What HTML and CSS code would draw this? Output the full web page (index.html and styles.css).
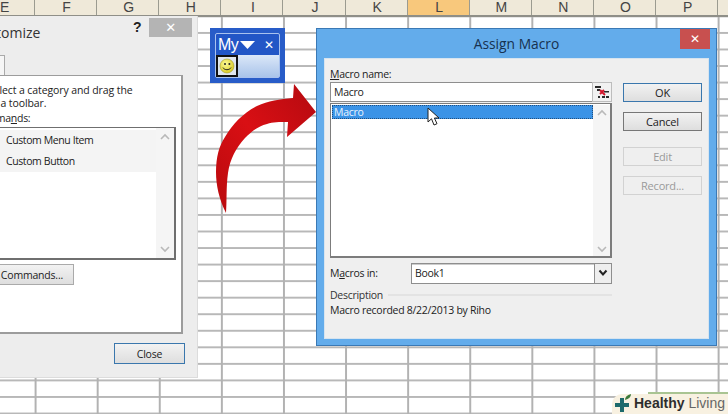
FILE: index.html
```html
<!DOCTYPE html>
<html lang="en">
<head>
<meta charset="utf-8">
<title>Assign Macro</title>
<link rel="stylesheet" href="styles.css">
</head>
<body>
<div class="sheet">
  <div class="columns">
    <div class="col c-e">E</div><div class="col">F</div><div class="col">G</div><div class="col">H</div><div class="col">I</div><div class="col">J</div><div class="col">K</div><div class="col active">L</div><div class="col">M</div><div class="col">N</div><div class="col">O</div><div class="col">P</div><div class="col"></div>
  </div>
  <div class="cells"></div>

  <section class="customize">
    <header class="cust-head">
      <h2 class="cust-title">Customize</h2>
      <span class="help">?</span>
      <span class="cust-close">✕</span>
    </header>
    <div class="tab"></div>
    <div class="panel">
      <p class="hint">Select a category and drag the<br>to a toolbar.</p>
      <p class="cmds-label">Comma<u>n</u>ds:</p>
      <div class="cmds">
        <div class="cmd-rows">
          <div class="cmd">Custom Menu Item</div>
          <div class="cmd">Custom Button</div>
        </div>
        <div class="scroll">
          <svg width="12" height="8" viewBox="0 0 12 8"><path d="M2 6l4-4 4 4" fill="none" stroke="#b9b9b9" stroke-width="1.6"/></svg>
          <svg width="12" height="8" viewBox="0 0 12 8"><path d="M2 2l4 4 4-4" fill="none" stroke="#b9b9b9" stroke-width="1.6"/></svg>
        </div>
      </div>
      <button class="btn cmd-btn">Rearrange Commands...</button>
    </div>
    <div class="cust-foot"><button class="btn primary close-btn">Close</button></div>
  </section>

  <section class="toolbar">
    <div class="tb-inner">
      <div class="tb-title"><span class="tb-name">My</span>
        <svg class="tb-caret" width="15" height="8" viewBox="0 0 15 8"><path d="M0 0h15L7.500 8z" fill="#fff"/></svg>
        <span class="tb-x">✕</span></div>
      <div class="tb-body">
        <div class="smile-box">
          <svg width="16" height="16" viewBox="0 0 16 16"><defs><radialGradient id="sm" cx=".4" cy=".35" r=".7"><stop offset="0" stop-color="#fdfb9a"/><stop offset="1" stop-color="#d6c71c"/></radialGradient></defs><circle cx="8" cy="8" r="7" fill="url(#sm)" stroke="#a59a2a" stroke-width=".6"/><circle cx="6" cy="6" r="1" fill="#222"/><circle cx="10.400" cy="6" r="1" fill="#222"/><path d="M4 9.600c1.400 2.800 6.400 2.800 8 0" fill="none" stroke="#222" stroke-width="1"/></svg>
        </div>
      </div>
    </div>
  </section>

  <svg class="arrow" width="125" height="145" viewBox="0 0 125 145">
    <defs><linearGradient id="ar" x1="0" y1="1" x2="1" y2="0"><stop offset="0" stop-color="#b80a0d"/><stop offset=".5" stop-color="#d90f14"/><stop offset="1" stop-color="#b40a10"/></linearGradient></defs>
    <path d="M21 138C14 124 11 110 11 97 11 82 14 71 20 62 28 49 38 38 52 31 63 26 75 24 88 23L89 9 111 37 82 62 83 47C74 47 68 47 62 49 53 51 46 57 40 63 31 73 25 84 23 98 21 112 22 125 21 138z" fill="url(#ar)"/>
  </svg>

  <section class="assign">
    <header class="as-head">
      <h1 class="as-title">Assign Macro</h1>
      <span class="as-close">✕</span>
    </header>
    <div class="as-body">
      <div class="as-main">
        <label class="lbl"><u>M</u>acro name:</label>
        <div class="name-row">
          <div class="name-input">Macro</div>
          <div class="ref-btn">
            <svg width="16" height="14" viewBox="0 0 16 14"><path d="M1 1h6v2H1zM3 4h3v2H3zM10 6h5v1.500h-5zM4 11h2v2H4zM8 11h3v2H8zM12 11h3v2h-3z" fill="#2a2a2a"/><path d="M6 5l5 5M6 9l4-4" stroke="#d2142a" stroke-width="2"/></svg>
          </div>
        </div>
        <div class="macro-list">
          <div class="macro-rows"><div class="macro-sel">Macro</div></div>
          <div class="scroll as-scroll">
            <svg width="12" height="8" viewBox="0 0 12 8"><path d="M2 6l4-4 4 4" fill="none" stroke="#b9b9b9" stroke-width="1.600"/></svg>
            <svg width="12" height="8" viewBox="0 0 12 8"><path d="M2 2l4 4 4-4" fill="none" stroke="#b9b9b9" stroke-width="1.600"/></svg>
          </div>
        </div>
        <div class="in-row">
          <label class="lbl in-lbl">M<u>a</u>cros in:</label>
          <div class="select"><span class="sel-val">Book1</span>
            <span class="sel-btn"><svg width="10" height="8" viewBox="0 0 10 8"><path d="M1.500 1.500L5 5.500l3.500-4" fill="none" stroke="#222" stroke-width="2"/></svg></span>
          </div>
        </div>
        <div class="desc-head"><span>Description</span><i class="rule"></i></div>
        <p class="desc">Macro recorded 8/22/2013 by Riho</p>
      </div>
      <div class="as-side">
        <button class="btn primary side">OK</button>
        <button class="btn side dark">Cancel</button>
        <button class="btn side off gap-top">Edit</button>
        <button class="btn side off">Record...</button>
      </div>
    </div>
  </section>

  <svg class="cursor" width="16" height="20" viewBox="0 0 16 20"><path d="M1 1v14l3.500-3.200L7 18l3-1.300-2.600-5.700H12z" fill="#fff" stroke="#222" stroke-width="1"/></svg>

  <div class="logo">
    <svg class="logo-mark" width="20" height="20" viewBox="0 0 20 20"><path d="M7 4h4v5h5v4h-5v5H7v-5H2V9h5z" fill="#1d6a6c"/><path d="M12 6c0-3 2-5 6-6 0 3-2 5-6 6z" fill="#3d7a3a"/></svg>
    <span class="logo-a">Healthy</span> <span class="logo-b">Living</span>
  </div>
</div>
</body>
</html>
```

FILE: styles.css
```css
*{box-sizing:border-box}
html,body{margin:0;padding:0}
body{width:728px;height:414px;overflow:hidden;background:#fff;font-family:"Open Sans","Noto Sans",sans-serif;color:#222;letter-spacing:-.28px}
.sheet{position:relative;width:728px;height:414px;overflow:hidden}
.columns{display:flex;height:17px;background:#efe9d9;border-bottom:2px solid #8f8f88;margin-left:-27px;letter-spacing:0}
.col{flex:0 0 62.1px;border-right:1px solid #9b9b90;font:14px/15px "Liberation Sans",sans-serif;text-align:center;color:#444;padding-left:2px}
.col.active{background:#f8c87c}
.cells{height:397px;background-color:#fff;background-image:linear-gradient(to right,#b2b2b2 2px,transparent 2px),linear-gradient(to bottom,#b8b8b8 2px,transparent 2px);background-size:62.1px 16.55px;background-position:-27.5px -1.600px}

.customize{position:absolute;left:-60px;top:16px;width:258px;height:362px;background:#ededed;border:solid #dcdcdc;border-width:0 1px 1px 0;display:flex;flex-direction:column}
.cust-head{position:relative;height:39px}
.cust-title{position:absolute;left:32px;top:7px;margin:0;font-weight:400;font-size:14px;line-height:20px;color:#333;letter-spacing:0}
.help{position:absolute;left:193px;top:1px;font:700 14px/20px "Liberation Sans",sans-serif;color:#222}
.cust-close{position:absolute;left:209px;top:2px;width:43px;height:19px;background:#b4b4b4;color:#fff;text-align:center;font:13px/19px "DejaVu Sans",sans-serif}
.tab{height:20px;width:65px;background:#f6f6f6;border:1px solid #aaa;border-bottom:0}
.panel{position:relative;height:259px;width:243px;background:#fff;border:1px solid #9c9c9c;border-width:1px 2px 2px 1px;padding:8px 0 0 46px}
.hint{margin:0 0 0 1px;font-size:10.5px;line-height:13px;color:#222;letter-spacing:-.1px}
.cmds-label{margin:0 0 0 -13px;font-size:10.500px;line-height:13px;padding-top:2px}
.cmds{display:flex;width:234px;height:133px;margin:2px 0 0 -45px;border:solid #6f6f6f;border-width:1px 2px 2px 1px}
.cmd-rows{flex:1;padding:2px 0 0}
.cmd{font-size:10.500px;line-height:21px;color:#222;background:#f4f4f4;padding-left:63px;letter-spacing:-.4px}
.scroll{width:18px;background:#f5f5f5;display:flex;flex-direction:column;justify-content:space-between;align-items:center;padding:5px 0}
.btn{font-family:"Open Sans","Noto Sans",sans-serif;font-size:10.500px;letter-spacing:-.2px;color:#222;background:linear-gradient(#f2f2f2,#dedede);border:1px solid #aaa;padding:0;display:block}
.cmd-btn{position:absolute;left:-20px;bottom:47px;width:153px;height:21px;text-align:right;padding-right:10px;white-space:nowrap}
.cust-foot{padding:9px 0 0 174px}
.close-btn{width:71px;height:21px}
.primary{border:1px solid #3a77ad}

.toolbar{position:absolute;left:210px;top:28px;width:75px;height:55px;background:#285cc8;padding:5px}
.tb-inner{height:45px;border:1px solid #a9c2ee;border-radius:2px;display:flex;flex-direction:column;background:#2256c6}
.tb-title{height:22px;display:flex;align-items:center;padding-left:2px;color:#fff;letter-spacing:0}
.tb-name{font:16px/20px "Liberation Sans",sans-serif;letter-spacing:-.5px;width:22px}
.tb-caret{margin-right:9px}
.tb-x{font:12px/16px "DejaVu Sans",sans-serif}
.tb-body{flex:1;background:linear-gradient(#dbe7f8,#a9c4ea)}
.smile-box{width:22px;height:22px;border:2px solid #111;background:#dfe6ef;display:flex;align-items:center;justify-content:center}

.arrow{position:absolute;left:205px;top:75px}

.assign{position:absolute;left:316px;top:28px;width:401px;height:318px;background:#63aceb;border:1px solid #3b79b5;padding-top:29px}
.as-head{position:absolute;left:0;top:0;width:100%;height:29px}
.as-title{margin:0;text-align:center;font-weight:400;font-size:13.800px;line-height:30px;color:#17314f;letter-spacing:0}
.as-close{position:absolute;left:363px;top:0;width:30px;height:20px;background:#c8504f;color:#fff;text-align:center;font:12px/20px "DejaVu Sans",sans-serif}
.as-body{display:flex;width:385px;height:281px;margin-left:7px;background:#efefef;border:1px solid #d7e4ef;padding:8px 0 0 5px}
.as-main{width:282px}
.lbl{display:block;font-size:10.500px;line-height:14px;color:#222}
.name-row{display:flex;height:20px;margin-top:1px}
.name-input{flex:1;background:#fff;border:1px solid #8e8e8e;border-right:0;font-size:10.500px;line-height:18px;padding-left:3px}
.ref-btn{width:20px;background:#f1f1f1;border:1px solid #bdbdbd;display:flex;align-items:center;justify-content:center}
.macro-list{display:flex;height:155px;margin-top:1px;background:#fff;border:solid #7c7c7c;border-width:1px 2px 2px 1px;padding:1px 0 0 1px}
.macro-rows{flex:1}
.macro-sel{height:14px;background:#3b93e6;border:1px dotted #234f7d;color:#e9f4ff;font-size:10.500px;line-height:12px;padding-left:1px}
.as-scroll{width:17px;padding:4px 0 3px}
.in-row{display:flex;align-items:center;margin-top:5px;height:20px}
.in-lbl{width:81px}
.select{flex:1;display:flex;height:21px;background:#fff;border:1px solid #8e8e8e;box-shadow:inset 0 1px 0 #ccc}
.sel-val{flex:1;font-size:10.500px;line-height:19px;padding-left:3px}
.sel-btn{width:17px;background:#eee;border-left:1px solid #8e8e8e;display:flex;align-items:center;justify-content:center}
.desc-head{display:flex;align-items:center;margin-top:5px;font-size:10.500px;line-height:14px;color:#333}
.rule{flex:1;height:2px;background:#e3e3e3;margin-left:5px}
.desc{margin:1px 0 0;font-size:10.500px;line-height:15px}
.as-side{padding:16px 0 0 11px;display:flex;flex-direction:column}
.side{width:79px;height:19px;margin-bottom:10px;font-size:11px}
.dark{border-color:#777}
.off{color:#9a9a9a;background:#efefef;border-color:#d2d2d2}
.gap-top{margin-top:6px}

.cursor{position:absolute;left:427px;top:107px}

.logo{position:absolute;right:0;bottom:0;width:116px;height:20px;background:#f8f1e1;border-top-left-radius:10px;padding-left:22px;font:700 14px/19px "Liberation Sans",sans-serif;white-space:nowrap;color:#2d2d2d;letter-spacing:0}
.logo::before{content:"";position:absolute;right:0;top:-2px;width:80px;height:2px;background:#a9c492}
.logo-mark{position:absolute;left:1px;top:0}
.logo-b{font-weight:400;color:#666}
```
